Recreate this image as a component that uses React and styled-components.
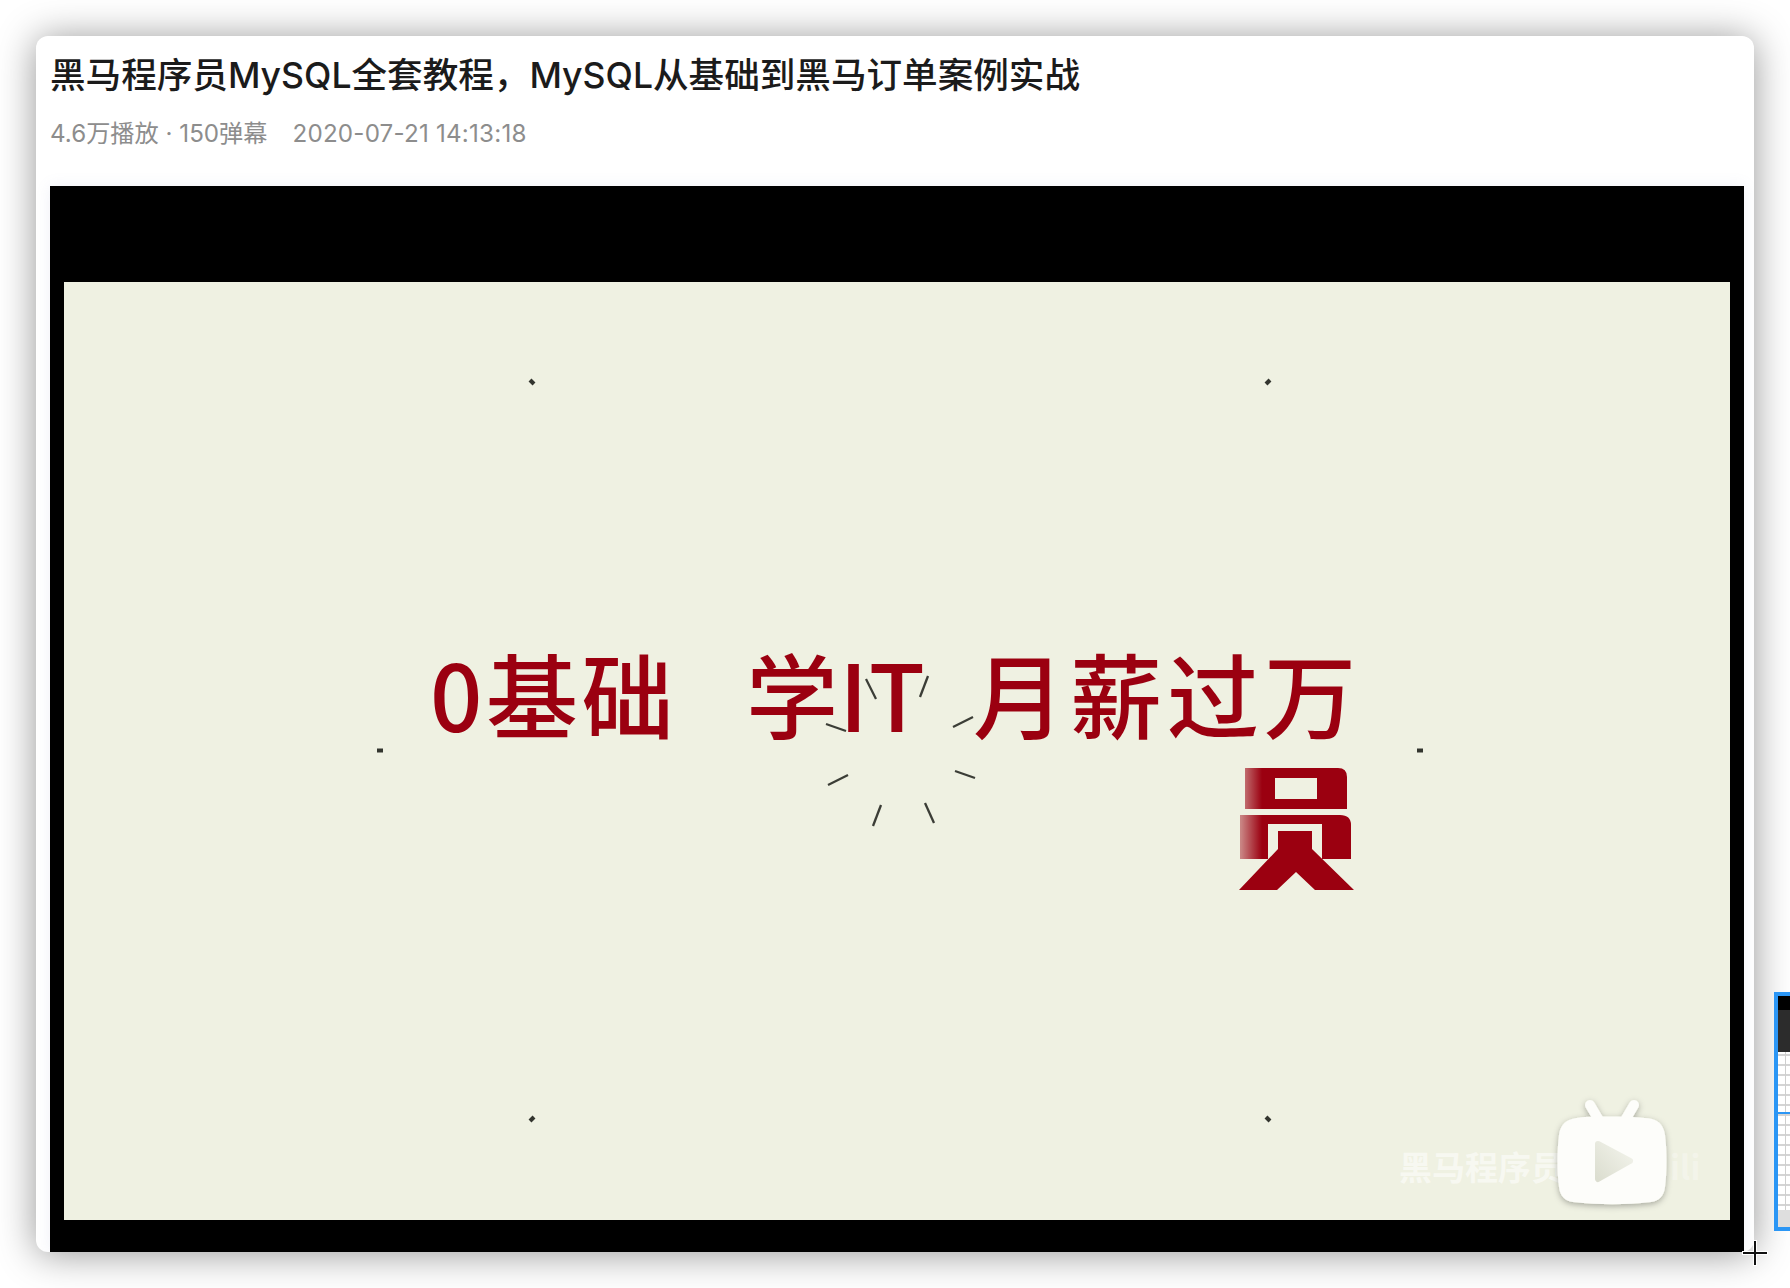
import React from "react";
import styled, { createGlobalStyle } from "styled-components";

const Global = createGlobalStyle`
  html, body { margin: 0; padding: 0; background: #fff; }
  body { width: 1790px; height: 1288px; overflow: hidden; position: relative; }
`;

const FONT = `Inter, "Noto Sans CJK SC", "Noto Sans", sans-serif`;

const Page = styled.main`
  box-sizing: border-box;
  width: 1790px;
  height: 1288px;
  padding: 36px;
  font-family: ${FONT};
`;

const Card = styled.article`
  box-sizing: border-box;
  width: 1718px;
  height: 1216px;
  display: flex;
  flex-direction: column;
  padding: 0 10px 0 14px;
  background: #fff;
  border-radius: 12px;
  box-shadow: 0 2px 38px rgba(0, 0, 0, 0.42);
  overflow: hidden;
`;

const Title = styled.h1`
  margin: 17px 0 0 0;
  font-size: 35.6px;
  line-height: 45px;
  font-weight: 500;
  color: #1b1b1b;
  white-space: nowrap;
`;

const Meta = styled.div`
  display: flex;
  gap: 25px;
  margin-top: 19px;
  font-size: 24.2px;
  line-height: 34px;
  color: #8d8d8d;
  white-space: nowrap;
`;

const Stamp = styled.span`
  letter-spacing: 0.2px;
`;

const Player = styled.section`
  flex: 1;
  margin-top: 35px;
  display: flex;
  align-items: flex-end;
  padding: 0 14px 32px;
  background: #000;
  box-shadow: 0 0 14px rgba(120, 130, 190, 0.12);
`;

const Frame = styled.div`
  position: relative;
  width: 1666px;
  height: 938px;
  background: #eff1e2;
  overflow: hidden;
`;

const Art = styled.svg`
  position: absolute;
  left: 0;
  top: 0;
  width: 1666px;
  height: 938px;
`;

const Slogan = styled.span`
  position: absolute;
  left: ${(p) => p.$x}px;
  top: ${(p) => p.$y}px;
  font-family: "Noto Sans CJK SC", sans-serif;
  font-size: 92px;
  line-height: 100px;
  font-weight: 500;
  letter-spacing: ${(p) => p.$spacing || 0}px;
  color: #9b0010;
  white-space: nowrap;
`;

const Watermark = styled.span`
  position: absolute;
  left: ${(p) => p.$x}px;
  top: 862px;
  font-family: "Noto Sans CJK SC", sans-serif;
  font-size: 33px;
  line-height: 44px;
  font-weight: 700;
  color: rgba(255, 255, 255, ${(p) => p.$alpha});
  white-space: nowrap;
`;

const Thumb = styled.aside`
  position: absolute;
  box-sizing: border-box;
  left: 1774px;
  top: 992px;
  width: 16px;
  height: 239px;
  border: 4px solid #2b96f5;
  border-right: 0;
  display: flex;
  flex-direction: column;
  background:
    linear-gradient(#000 0 14px, #2c2c2c 14px 56px, transparent 56px),
    linear-gradient(transparent 116px, #2b96f5 116px 118px, transparent 118px),
    linear-gradient(transparent 214px, #dedede 214px),
    linear-gradient(90deg, transparent 7px, #cfcfcf 7px 8px, transparent 8px),
    repeating-linear-gradient(#fff 0 8px, #d4d4d4 8px 10px),
    #fff;
`;

const Cross = styled.svg`
  position: absolute;
  left: 1741px;
  top: 1239px;
  width: 28px;
  height: 28px;
`;

const TICKS = [
  [866, 679, 876, 699], [928, 676, 920, 697], [826, 724, 846, 731], [973, 717, 953, 727],
  [848, 775, 828, 785], [955, 771, 975, 778], [881, 805, 873, 826], [925, 803, 934, 823],
];
const DOTS = [
  [530, 380, 534, 384], [1270, 380, 1266, 384], [377, 750.5, 383, 750.5],
  [1417, 750.5, 1423, 750.5], [534, 1117, 530, 1121], [1266, 1117, 1270, 1121],
];

export default function App() {
  return (
    <Page>
      <Global />
      <Card>
        <Title>黑马程序员MySQL全套教程，MySQL从基础到黑马订单案例实战</Title>
        <Meta>
          <span>4.6万播放 · 150弹幕</span>
          <Stamp>2020-07-21 14:13:18</Stamp>
        </Meta>
        <Player>
          <Frame>
            <Slogan $x={366} $y={360} $spacing={3.5}>0基础</Slogan>
            <Slogan $x={682} $y={360} $spacing={1.2}>学IT</Slogan>
            <Slogan $x={909} $y={360} $spacing={5}>月薪过万</Slogan>
            <Watermark $x={1335} $alpha={0.55}>黑马程序员</Watermark>
            <Watermark $x={1606} $alpha={0.28}>ili</Watermark>
            <Art viewBox="64 282 1666 938">
              <defs>
                <linearGradient id="fade" x1="1241" x2="1262" y1="0" y2="0" gradientUnits="userSpaceOnUse">
                  <stop offset="0" stopColor="#9b0010" stopOpacity="0.45" />
                  <stop offset="1" stopColor="#9b0010" />
                </linearGradient>
                <linearGradient id="play" x1="0" x2="1" y1="1" y2="0">
                  <stop offset="0" stopColor="#dcded0" />
                  <stop offset="1" stopColor="#f3f4ec" />
                </linearGradient>
                <filter id="tvShadow" x="-20%" y="-20%" width="140%" height="140%">
                  <feDropShadow dx="0" dy="2" stdDeviation="3" floodColor="#000" floodOpacity="0.3" />
                </filter>
              </defs>
              <g stroke="#3b3d36" strokeWidth="2.3" fill="none">
                {TICKS.map((t) => (
                  <line key={t.join()} x1={t[0]} y1={t[1]} x2={t[2]} y2={t[3]} />
                ))}
              </g>
              <g stroke="#33352e" strokeWidth="4" fill="none">
                {DOTS.map((t) => (
                  <line key={t.join()} x1={t[0]} y1={t[1]} x2={t[2]} y2={t[3]} />
                ))}
              </g>
              <g fill="url(#fade)" fillRule="evenodd">
                <path d="M1245 768H1338Q1347 768 1347 777V809H1245ZM1275 778V799H1317V778Z" />
                <path d="M1240 815H1340Q1351 815 1351 825V859H1322V824H1268V859H1240Z" />
              </g>
              <path fill="#9b0010" d="M1278 831H1312V849L1354 890H1315L1296 872L1277 890H1239L1278 849Z" />
              <g filter="url(#tvShadow)">
                <g stroke="#fdfdfa" strokeWidth="10" strokeLinecap="round">
                  <line x1="1590" y1="1105" x2="1600" y2="1122" />
                  <line x1="1634" y1="1105" x2="1624" y2="1122" />
                </g>
                <path
                  fill="#fdfdfa"
                  d="M1585 1117C1620 1116 1640 1117 1652 1119C1660 1121 1664 1127 1665 1135C1667 1150 1667 1172 1665 1187C1664 1196 1659 1201 1651 1202C1625 1205 1600 1205 1573 1202C1565 1201 1560 1196 1559 1187C1557 1172 1557 1150 1559 1135C1560 1127 1564 1121 1572 1119C1576 1118 1580 1117 1585 1117Z"
                />
              </g>
              <path
                fill="url(#play)"
                stroke="url(#play)"
                strokeWidth="6"
                strokeLinejoin="round"
                d="M1598 1144L1630 1161L1598 1179Z"
              />
            </Art>
          </Frame>
        </Player>
      </Card>
      <Thumb />
      <Cross viewBox="0 0 28 28">
        <path d="M14 1V27M1 14H27" stroke="#fff" strokeWidth="4" />
        <path d="M14 2V26M2 14H26" stroke="#111" strokeWidth="2" />
      </Cross>
    </Page>
  );
}
